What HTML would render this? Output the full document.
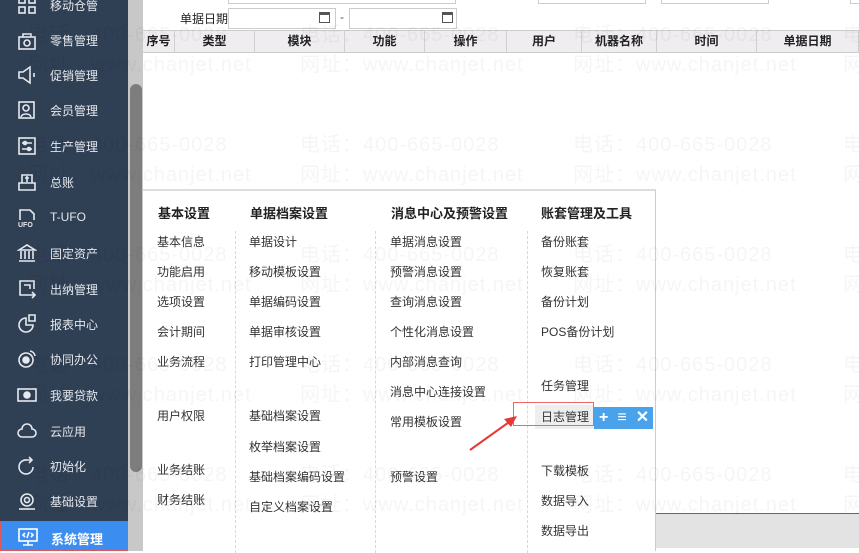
<!DOCTYPE html>
<html><head><meta charset="utf-8"><style>
*{margin:0;padding:0;box-sizing:border-box}
body{width:859px;height:551px;overflow:hidden;background:#fff;font-family:"Liberation Sans","Noto Sans CJK SC",sans-serif;position:relative;font-size:12px;color:#333}
.abs{position:absolute}
#side{left:0;top:0;width:128px;height:551px;background:#2f3f54}
.it{position:absolute;left:0;width:128px;height:34px;color:#e6e9ee;font-size:12px}
.it span{position:absolute;left:50px;top:9px}
.it svg{position:absolute;left:17px;top:7px}
#track{left:128px;top:0;width:15px;height:551px;background:#c8c8c8}
#thumb{left:130px;top:84px;width:12px;height:388px;background:#7d7d7d;border-radius:6px}
.inp{position:absolute;border:1px solid #ccc;background:#fff;height:21px}
.hd{position:absolute;top:30px;height:23px;background:#efedf0;border-top:1px solid #ccc;border-bottom:1px solid #ccc;border-right:1px solid #d0d0d0;font-weight:bold;font-size:12px;text-align:center;line-height:21px;color:#222}
#pop{left:143px;top:189px;width:513px;height:362px;background:#fff;border-top:2px solid #ddd;border-right:1px solid #ccc}
.h{position:absolute;top:12px;font-weight:bold;font-size:13px;color:#222}
.m{position:absolute;font-size:12px;color:#333;margin-top:-2px}
.dash{position:absolute;top:40px;height:322px;border-left:1px dashed #d8d8d8}
.wm{position:absolute;font-size:20px;color:rgba(0,0,0,0.04);white-space:nowrap;letter-spacing:1px}
</style></head><body>
<div id="side" class="abs">
<div class="it" style="top:-12px"><svg width="20" height="20" viewBox="0 0 20 20" fill="none" stroke="#e6e9ee" stroke-width="1.6"><rect x="2" y="2" width="6" height="6"/><rect x="12" y="2" width="6" height="6"/><rect x="2" y="12" width="6" height="6"/><rect x="12" y="12" width="6" height="6"/></svg><span>移动仓管</span></div>
<div class="it" style="top:23px"><svg width="20" height="20" viewBox="0 0 20 20" fill="none" stroke="#e6e9ee" stroke-width="1.6"><rect x="2" y="7" width="16" height="12"/><path d="M6 7V4h8v3"/><circle cx="10" cy="13" r="3"/></svg><span>零售管理</span></div>
<div class="it" style="top:58px"><svg width="20" height="20" viewBox="0 0 20 20" fill="none" stroke="#e6e9ee" stroke-width="1.6"><path d="M2 7h4l7-5v16l-7-5H2z"/><path d="M17 8v4"/></svg><span>促销管理</span></div>
<div class="it" style="top:93px"><svg width="20" height="20" viewBox="0 0 20 20" fill="none" stroke="#e6e9ee" stroke-width="1.6"><rect x="2" y="2" width="15" height="16"/><circle cx="9" cy="8" r="3"/><path d="M4 17c1-4 9-4 10 0"/></svg><span>会员管理</span></div>
<div class="it" style="top:129px"><svg width="20" height="20" viewBox="0 0 20 20" fill="none" stroke="#e6e9ee" stroke-width="1.6"><rect x="2" y="2" width="16" height="16"/><path d="M5 7h10M5 13h10"/><circle cx="8" cy="7" r="1.5"/><circle cx="12" cy="13" r="1.5"/></svg><span>生产管理</span></div>
<div class="it" style="top:165px"><svg width="20" height="20" viewBox="0 0 20 20" fill="none" stroke="#e6e9ee" stroke-width="1.6"><path d="M2 11h16v7H2z"/><path d="M5 11V3h10v8"/><path d="M8 6h4M10 4v6"/></svg><span>总账</span></div>
<div class="it" style="top:201px"><svg width="20" height="20" viewBox="0 0 20 20" fill="none" stroke="#e6e9ee" stroke-width="1.6"><path d="M3 12V2h10l4 4v6"/><text x="1" y="19" font-size="7" fill="#e6e9ee" stroke="none" font-weight="bold">UFO</text></svg><span>T-UFO</span></div>
<div class="it" style="top:236px"><svg width="20" height="20" viewBox="0 0 20 20" fill="none" stroke="#e6e9ee" stroke-width="1.6"><path d="M2 7L10 2l8 5zM4 8v8M8 8v8M12 8v8M16 8v8M2 18h16"/></svg><span>固定资产</span></div>
<div class="it" style="top:272px"><svg width="20" height="20" viewBox="0 0 20 20" fill="none" stroke="#e6e9ee" stroke-width="1.6"><path d="M12 16H3V2h14v8"/><path d="M7 6h6v4M12 16h6M15 13l3 3-3 3"/></svg><span>出纳管理</span></div>
<div class="it" style="top:307px"><svg width="20" height="20" viewBox="0 0 20 20" fill="none" stroke="#e6e9ee" stroke-width="1.6"><path d="M9 4a7 7 0 1 0 7 7H9z"/><path d="M12 1h6v6h-6z"/></svg><span>报表中心</span></div>
<div class="it" style="top:342px"><svg width="20" height="20" viewBox="0 0 20 20" fill="none" stroke="#e6e9ee" stroke-width="1.6"><circle cx="9" cy="11" r="7"/><circle cx="9" cy="11" r="3" fill="#e6e9ee"/><path d="M13 2a6 6 0 0 1 5 5"/></svg><span>协同办公</span></div>
<div class="it" style="top:378px"><svg width="20" height="20" viewBox="0 0 20 20" fill="none" stroke="#e6e9ee" stroke-width="1.6"><rect x="1" y="4" width="18" height="12"/><circle cx="10" cy="10" r="3" fill="#e6e9ee"/></svg><span>我要贷款</span></div>
<div class="it" style="top:414px"><svg width="20" height="20" viewBox="0 0 20 20" fill="none" stroke="#e6e9ee" stroke-width="1.6"><path d="M5 16h10a4 4 0 0 0 0-8 5 5 0 0 0-10 0 4 4 0 0 0 0 8z"/></svg><span>云应用</span></div>
<div class="it" style="top:449px"><svg width="20" height="20" viewBox="0 0 20 20" fill="none" stroke="#e6e9ee" stroke-width="1.6"><path d="M16 11a7 7 0 1 1-6-7h5"/><path d="M12 1l3 3-3 3"/></svg><span>初始化</span></div>
<div class="it" style="top:484px"><svg width="20" height="20" viewBox="0 0 20 20" fill="none" stroke="#e6e9ee" stroke-width="1.6"><circle cx="10" cy="9" r="6"/><circle cx="10" cy="9" r="2.5"/><path d="M2 18h16"/></svg><span>基础设置</span></div>
<div class="it" style="top:521px;height:30px;background:#3b8df0;border:1px solid #e25555"><svg width="20" height="20" viewBox="0 0 20 20" fill="none" stroke="#fff" stroke-width="1.6" style="top:5px"><rect x="1" y="2" width="18" height="12"/><path d="M10 14v4M5 18h10M7 6L5 8l2 2M13 6l2 2-2 2M11 5l-2 6"/></svg><span style="top:7px;color:#fff;font-weight:bold;font-size:13px">系统管理</span></div>
</div>
<div id="track" class="abs"></div><div id="thumb" class="abs"></div>

<div class="inp" style="left:228px;top:-17px;width:228px"></div>
<div class="inp" style="left:538px;top:-17px;width:108px"></div>
<div class="inp" style="left:661px;top:-17px;width:108px"></div>
<div class="inp" style="left:850px;top:-17px;width:20px"></div>
<div class="abs" style="left:180px;top:10px;font-size:12px;color:#222">单据日期</div>
<div class="inp" style="left:228px;top:8px;width:108px"></div>
<div class="abs" style="left:319px;top:12px;width:11px;height:11px;border:1.5px solid #555;border-top-width:3px"></div>
<div class="abs" style="left:340px;top:10px;color:#555">-</div>
<div class="inp" style="left:349px;top:8px;width:108px"></div>
<div class="abs" style="left:442px;top:12px;width:11px;height:11px;border:1.5px solid #555;border-top-width:3px"></div>

<div class="hd" style="left:143px;width:32px">序号</div>
<div class="hd" style="left:175px;width:80px">类型</div>
<div class="hd" style="left:255px;width:90px">模块</div>
<div class="hd" style="left:345px;width:80px">功能</div>
<div class="hd" style="left:425px;width:82px">操作</div>
<div class="hd" style="left:507px;width:75px">用户</div>
<div class="hd" style="left:582px;width:75px">机器名称</div>
<div class="hd" style="left:657px;width:100px">时间</div>
<div class="hd" style="left:757px;width:102px">单据日期</div>

<div class="abs" style="left:656px;top:513px;width:203px;height:1px;background:#666"></div>
<div class="abs" style="left:656px;top:514px;width:203px;height:34px;background:#e3e3e3"></div>

<div id="pop" class="abs">
<div class="h" style="left:15px">基本设置</div>
<div class="h" style="left:107px">单据档案设置</div>
<div class="h" style="left:248px">消息中心及预警设置</div>
<div class="h" style="left:398px">账套管理及工具</div>
<div class="dash" style="left:92px"></div><div class="dash" style="left:232px"></div><div class="dash" style="left:384px"></div>
<div class="m" style="left:14px;top:44px">基本信息</div>
<div class="m" style="left:14px;top:74px">功能启用</div>
<div class="m" style="left:14px;top:104px">选项设置</div>
<div class="m" style="left:14px;top:134px">会计期间</div>
<div class="m" style="left:14px;top:164px">业务流程</div>
<div class="m" style="left:14px;top:218px">用户权限</div>
<div class="m" style="left:14px;top:272px">业务结账</div>
<div class="m" style="left:14px;top:302px">财务结账</div>
<div class="m" style="left:106px;top:44px">单据设计</div>
<div class="m" style="left:106px;top:74px">移动模板设置</div>
<div class="m" style="left:106px;top:104px">单据编码设置</div>
<div class="m" style="left:106px;top:134px">单据审核设置</div>
<div class="m" style="left:106px;top:164px">打印管理中心</div>
<div class="m" style="left:106px;top:218px">基础档案设置</div>
<div class="m" style="left:106px;top:249px">枚举档案设置</div>
<div class="m" style="left:106px;top:279px">基础档案编码设置</div>
<div class="m" style="left:106px;top:309px">自定义档案设置</div>
<div class="m" style="left:247px;top:44px">单据消息设置</div>
<div class="m" style="left:247px;top:74px">预警消息设置</div>
<div class="m" style="left:247px;top:104px">查询消息设置</div>
<div class="m" style="left:247px;top:134px">个性化消息设置</div>
<div class="m" style="left:247px;top:164px">内部消息查询</div>
<div class="m" style="left:247px;top:194px">消息中心连接设置</div>
<div class="m" style="left:247px;top:224px">常用模板设置</div>
<div class="m" style="left:247px;top:279px">预警设置</div>
<div class="m" style="left:398px;top:44px">备份账套</div>
<div class="m" style="left:398px;top:74px">恢复账套</div>
<div class="m" style="left:398px;top:104px">备份计划</div>
<div class="m" style="left:398px;top:134px">POS备份计划</div>
<div class="m" style="left:398px;top:188px">任务管理</div>
<div class="abs" style="left:392px;top:214px;width:59px;height:24px;background:#eee"></div>
<div class="m" style="left:398px;top:219px">日志管理</div>
<div class="m" style="left:398px;top:273px">下载模板</div>
<div class="m" style="left:398px;top:303px">数据导入</div>
<div class="m" style="left:398px;top:333px">数据导出</div>
<div class="abs" style="left:370px;top:211px;width:81px;height:24px;border:1px solid #e66"></div>
<div class="abs" style="left:451px;top:216px;width:59px;height:22px;background:#4aa3ea;color:#fff;font-size:16px;font-weight:bold;line-height:22px;padding-left:5px"><span>+</span><span style="margin-left:9px">≡</span><span style="margin-left:9px">✕</span></div>
</div>
<svg class="abs" style="left:460px;top:405px" width="70" height="55"><path d="M10 45L52 15" stroke="#e53935" stroke-width="2"/><path d="M57 11L44 14L51 22z" fill="#e53935"/></svg>

<div class="abs" style="left:0;top:0;width:859px;height:551px;pointer-events:none">
<div class="wm" style="left:28px;top:18px">电话：400-665-0028</div><div class="wm" style="left:28px;top:48px">网址：www.chanjet.net</div>
<div class="wm" style="left:300px;top:18px">电话：400-665-0028</div><div class="wm" style="left:300px;top:48px">网址：www.chanjet.net</div>
<div class="wm" style="left:573px;top:18px">电话：400-665-0028</div><div class="wm" style="left:573px;top:48px">网址：www.chanjet.net</div>
<div class="wm" style="left:843px;top:18px">电话</div><div class="wm" style="left:843px;top:48px">网址</div>
<div class="wm" style="left:28px;top:128px">电话：400-665-0028</div><div class="wm" style="left:28px;top:158px">网址：www.chanjet.net</div>
<div class="wm" style="left:300px;top:128px">电话：400-665-0028</div><div class="wm" style="left:300px;top:158px">网址：www.chanjet.net</div>
<div class="wm" style="left:573px;top:128px">电话：400-665-0028</div><div class="wm" style="left:573px;top:158px">网址：www.chanjet.net</div>
<div class="wm" style="left:843px;top:128px">电话</div><div class="wm" style="left:843px;top:158px">网址</div>
<div class="wm" style="left:28px;top:238px">电话：400-665-0028</div><div class="wm" style="left:28px;top:268px">网址：www.chanjet.net</div>
<div class="wm" style="left:300px;top:238px">电话：400-665-0028</div><div class="wm" style="left:300px;top:268px">网址：www.chanjet.net</div>
<div class="wm" style="left:573px;top:238px">电话：400-665-0028</div><div class="wm" style="left:573px;top:268px">网址：www.chanjet.net</div>
<div class="wm" style="left:843px;top:238px">电话</div><div class="wm" style="left:843px;top:268px">网址</div>
<div class="wm" style="left:28px;top:348px">电话：400-665-0028</div><div class="wm" style="left:28px;top:378px">网址：www.chanjet.net</div>
<div class="wm" style="left:300px;top:348px">电话：400-665-0028</div><div class="wm" style="left:300px;top:378px">网址：www.chanjet.net</div>
<div class="wm" style="left:573px;top:348px">电话：400-665-0028</div><div class="wm" style="left:573px;top:378px">网址：www.chanjet.net</div>
<div class="wm" style="left:843px;top:348px">电话</div><div class="wm" style="left:843px;top:378px">网址</div>
<div class="wm" style="left:28px;top:458px">电话：400-665-0028</div><div class="wm" style="left:28px;top:488px">网址：www.chanjet.net</div>
<div class="wm" style="left:300px;top:458px">电话：400-665-0028</div><div class="wm" style="left:300px;top:488px">网址：www.chanjet.net</div>
<div class="wm" style="left:573px;top:458px">电话：400-665-0028</div><div class="wm" style="left:573px;top:488px">网址：www.chanjet.net</div>
<div class="wm" style="left:843px;top:458px">电话</div><div class="wm" style="left:843px;top:488px">网址</div>
</div>
</body></html>
